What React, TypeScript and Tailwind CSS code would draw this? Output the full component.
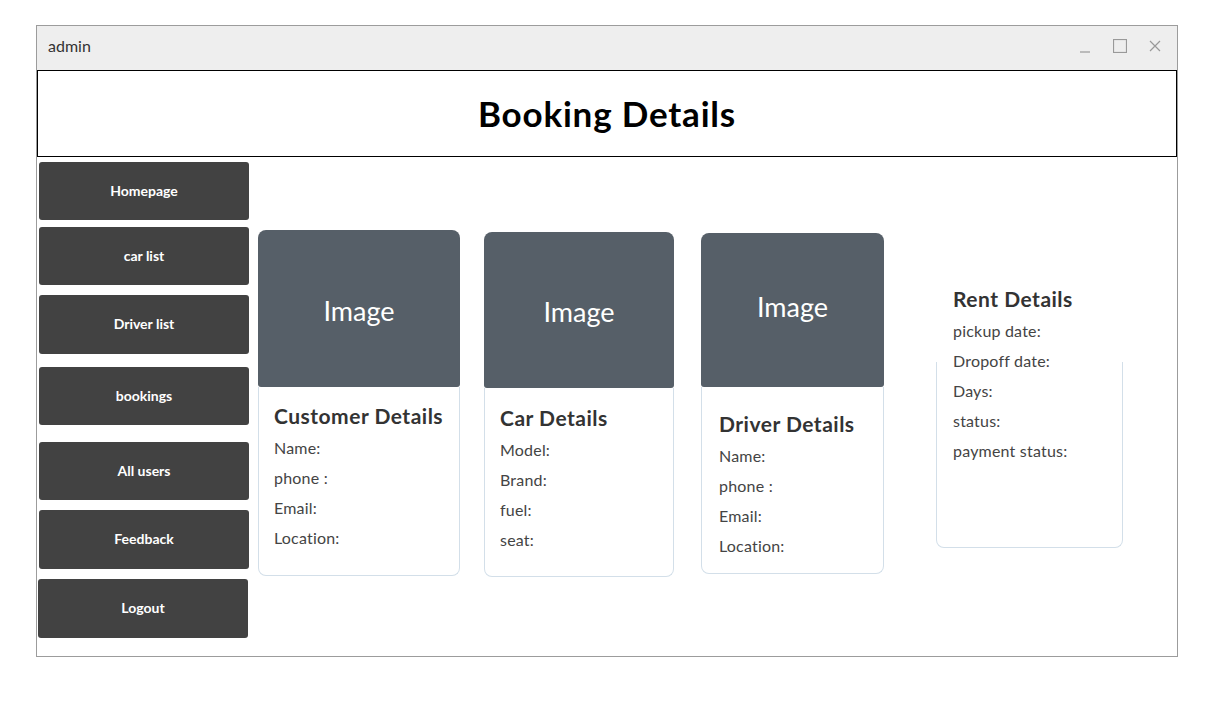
const font = { fontFamily: "Lato, 'Noto Sans', sans-serif" }

const navItems = [
  { label: "Homepage", cls: "mt-[5px] ml-[2px] h-[58px]" },
  { label: "car list", cls: "mt-[7px] ml-[2px] h-[58px]" },
  { label: "Driver list", cls: "mt-[10px] ml-[2px] h-[59px]" },
  { label: "bookings", cls: "mt-[13px] ml-[2px] h-[58px]" },
  { label: "All users", cls: "mt-[17px] ml-[2px] h-[58px]" },
  { label: "Feedback", cls: "mt-[10px] ml-[2px] h-[59px]" },
  { label: "Logout", cls: "mt-[10px] ml-[1px] h-[59px]" },
]

function InfoCard({
  title,
  fields,
  className,
  imageCls,
  bodyCls,
}: {
  title: string
  fields: string[]
  className: string
  imageCls: string
  bodyCls: string
}) {
  return (
    <div className={"flex flex-col " + className}>
      <div
        className={
          "flex items-center justify-center rounded-t-lg rounded-b-[3px] bg-[#565f68] text-[27px] text-white " +
          imageCls
        }
      >
        Image
      </div>
      <div className={"rounded-b-lg border-x border-b border-[#d3dfe9] " + bodyCls}>
        <h2 className="text-[21px] font-bold leading-[28px] tracking-[0.5px] text-[#333]">{title}</h2>
        <ul className="mt-[3px]">
          {fields.map((f) => (
            <li key={f} className="text-[16px] leading-[30px] tracking-[0.2px] text-[#444]">
              {f}
            </li>
          ))}
        </ul>
      </div>
    </div>
  )
}

export default function App() {
  return (
    <div className="h-[702px] w-[1207px] bg-white" style={font}>
      <div className="pl-[36px] pt-[25px]">
        <div className="flex h-[632px] w-[1142px] flex-col border border-[#9c9c9c]">
          {/* title bar */}
          <div className="flex h-[44px] items-center justify-between bg-[#eeeeee] pb-[5px] pl-[11px] pr-[16px]">
            <span className="text-[16px] text-[#333]">admin</span>
            <div className="flex items-center gap-[22px] text-[#999]">
              <svg width="12" height="14" viewBox="0 0 12 14">
                <line x1="1" y1="13" x2="11" y2="13" stroke="currentColor" strokeWidth="1.2" />
              </svg>
              <svg width="14" height="14" viewBox="0 0 14 14">
                <rect x="0.5" y="0.5" width="13" height="13" fill="none" stroke="currentColor" strokeWidth="1.2" />
              </svg>
              <svg width="12" height="12" viewBox="0 0 12 12">
                <path d="M1 1L11 11M11 1L1 11" stroke="currentColor" strokeWidth="1.2" />
              </svg>
            </div>
          </div>

          {/* header */}
          <div className="flex h-[87px] items-center justify-center border border-black">
            <h1 className="text-[35px] font-bold tracking-[0.8px] text-black">Booking Details</h1>
          </div>

          {/* body */}
          <div className="flex flex-1">
            <nav className="flex flex-col">
              {navItems.map((n) => (
                <button
                  key={n.label}
                  className={
                    "flex w-[210px] items-center justify-center rounded-[3px] bg-[#424242] pb-[2px] text-[14px] font-bold text-white " +
                    n.cls
                  }
                >
                  {n.label}
                </button>
              ))}
            </nav>

            <div className="flex items-start">
              <InfoCard
                title="Customer Details"
                fields={["Name:", "phone :", "Email:", "Location:"]}
                className="ml-[9px] mt-[73px] w-[202px]"
                imageCls="h-[157px] pt-[6px]"
                bodyCls="h-[189px] pl-[15px] pt-[15px]"
              />
              <InfoCard
                title="Car Details"
                fields={["Model:", "Brand:", "fuel:", "seat:"]}
                className="ml-[24px] mt-[75px] w-[190px]"
                imageCls="h-[156px] pt-[4px]"
                bodyCls="h-[189px] pl-[15px] pt-[16px]"
              />
              <InfoCard
                title="Driver Details"
                fields={["Name:", "phone :", "Email:", "Location:"]}
                className="ml-[27px] mt-[76px] w-[183px]"
                imageCls="h-[154px] pb-[5px]"
                bodyCls="h-[187px] pl-[17px] pt-[23px]"
              />

              {/* rent details */}
              <div className="ml-[52px] mt-[205px] h-[186px] w-[187px] rounded-b-lg border-x border-b border-[#d3dfe9]">
                <div className="-mt-[77px] pl-[16px]">
                  <h2 className="text-[21px] font-bold leading-[28px] tracking-[0.5px] text-[#333]">Rent Details</h2>
                  <ul className="mt-[3px]">
                    {["pickup date:", "Dropoff date:", "Days:", "status:", "payment status:"].map((f) => (
                      <li key={f} className="text-[16px] leading-[30px] tracking-[0.2px] text-[#444]">
                        {f}
                      </li>
                    ))}
                  </ul>
                </div>
              </div>
            </div>
          </div>
        </div>
      </div>
    </div>
  )
}
